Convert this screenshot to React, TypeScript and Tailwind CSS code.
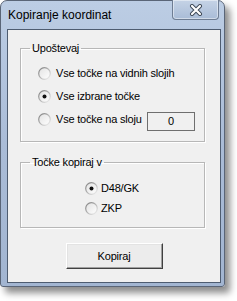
import React from "react";

type RadioProps = { checked?: boolean };

function Radio({ checked }: RadioProps) {
  return (
    <svg width="13" height="13" viewBox="0 0 13 13" className="shrink-0">
      <defs>
        <linearGradient id="rimGrad" x1="0" y1="0" x2="1" y2="1">
          <stop offset="0" stopColor="#7c7c7c" />
          <stop offset="0.55" stopColor="#b9b9b9" />
          <stop offset="1" stopColor="#f4f4f4" />
        </linearGradient>
        <linearGradient id="fillGrad" x1="0" y1="0" x2="1" y2="1">
          <stop offset="0" stopColor="#e2e2e2" />
          <stop offset="1" stopColor="#ffffff" />
        </linearGradient>
      </defs>
      <circle cx="6.5" cy="6.5" r="5.8" fill="url(#fillGrad)" stroke="url(#rimGrad)" strokeWidth="1.2" />
      {checked && <circle cx="6.5" cy="6.5" r="2" fill="#111" />}
    </svg>
  );
}

function CloseGlyph() {
  return (
    <svg width="14" height="12" viewBox="0 0 14 12">
      <path d="M3 2 L11 10 M11 2 L3 10" stroke="#3b4654" strokeWidth="4" strokeLinecap="round" />
      <path d="M3 2 L11 10 M11 2 L3 10" stroke="#ffffff" strokeWidth="2.2" strokeLinecap="round" />
    </svg>
  );
}

export default function App() {
  const font = { fontFamily: '"Liberation Sans", Arial, sans-serif' };

  return (
    <div className="w-[237px] h-[301px] bg-white" style={font}>
      <div className="w-[225px] h-[287px] flex flex-col rounded-t-[7px] rounded-b-[3px] border border-[#5a6577] bg-gradient-to-b from-[#bccde4] via-[#aabcd7] to-[#a2b5d1] shadow-[5px_6px_7px_rgba(0,0,0,0.45)]">
        {/* Title bar */}
        <div className="h-[28px] flex justify-between items-start">
          <div className="h-[28px] flex items-center pl-[7px] text-[12px] text-black">
            Kopiranje koordinat
          </div>
          <div className="-mt-px mr-[5px] w-[47px] h-[20px] flex items-center justify-center rounded-b-[4px] border border-t-0 border-[#6e7d93] bg-gradient-to-b from-[#c5d3e6] to-[#a9bcd7] shadow-[inset_0_0_0_1px_rgba(255,255,255,0.45)]">
            <CloseGlyph />
          </div>
        </div>

        {/* Client area */}
        <div className="ml-[6px] mr-[3px] h-[254px] border border-[#4e5c70] bg-[#f0f0f0] text-[11px] tracking-[-0.2px] text-black">
          <fieldset className="mt-[12px] ml-[12px] w-[185px] border border-[#b7b7b7] pt-[7px] pb-[10px] shadow-[inset_1px_1px_0_#fff,1px_1px_0_#fff]">
            <legend className="ml-[9px] px-[2px] leading-[13px]">Upoštevaj</legend>
            <div className="h-[23px] flex items-center pl-[17px] gap-[5px]">
              <Radio />
              <span className="whitespace-nowrap">Vse točke na vidnih slojih</span>
            </div>
            <div className="h-[23px] flex items-center pl-[17px] gap-[5px]">
              <Radio checked />
              <span className="whitespace-nowrap">Vse izbrane točke</span>
            </div>
            <div className="h-[23px] flex items-center pl-[17px] gap-[5px]">
              <Radio />
              <span className="w-[86px] shrink-0 whitespace-nowrap">Vse točke na sloju</span>
              <div className="w-[48px] h-[19px] shrink-0 flex items-center justify-center border border-[#6f6f6f] bg-[#f0f0f0] mt-[3px]">
                0
              </div>
            </div>
          </fieldset>

          <fieldset className="mt-[14px] ml-[12px] w-[185px] border border-[#b7b7b7] pt-[9px] pb-[9px] shadow-[inset_1px_1px_0_#fff,1px_1px_0_#fff]">
            <legend className="ml-[9px] px-[2px] leading-[13px]">Točke kopiraj v</legend>
            <div className="h-[20px] flex items-center pl-[64px] gap-[3px]">
              <Radio checked />
              <span>D48/GK</span>
            </div>
            <div className="h-[20px] flex items-center pl-[64px] gap-[3px]">
              <Radio />
              <span>ZKP</span>
            </div>
          </fieldset>

          <div className="mt-[15px] flex justify-center">
            <button className="w-[97px] h-[26px] flex items-center justify-center bg-[#ececec] border border-t-white border-l-white border-r-[#404040] border-b-[#404040] shadow-[inset_-1px_-1px_0_#a0a0a0,inset_1px_1px_0_#e3e3e3] text-[11px]">
              Kopiraj
            </button>
          </div>
        </div>
      </div>
    </div>
  );
}
